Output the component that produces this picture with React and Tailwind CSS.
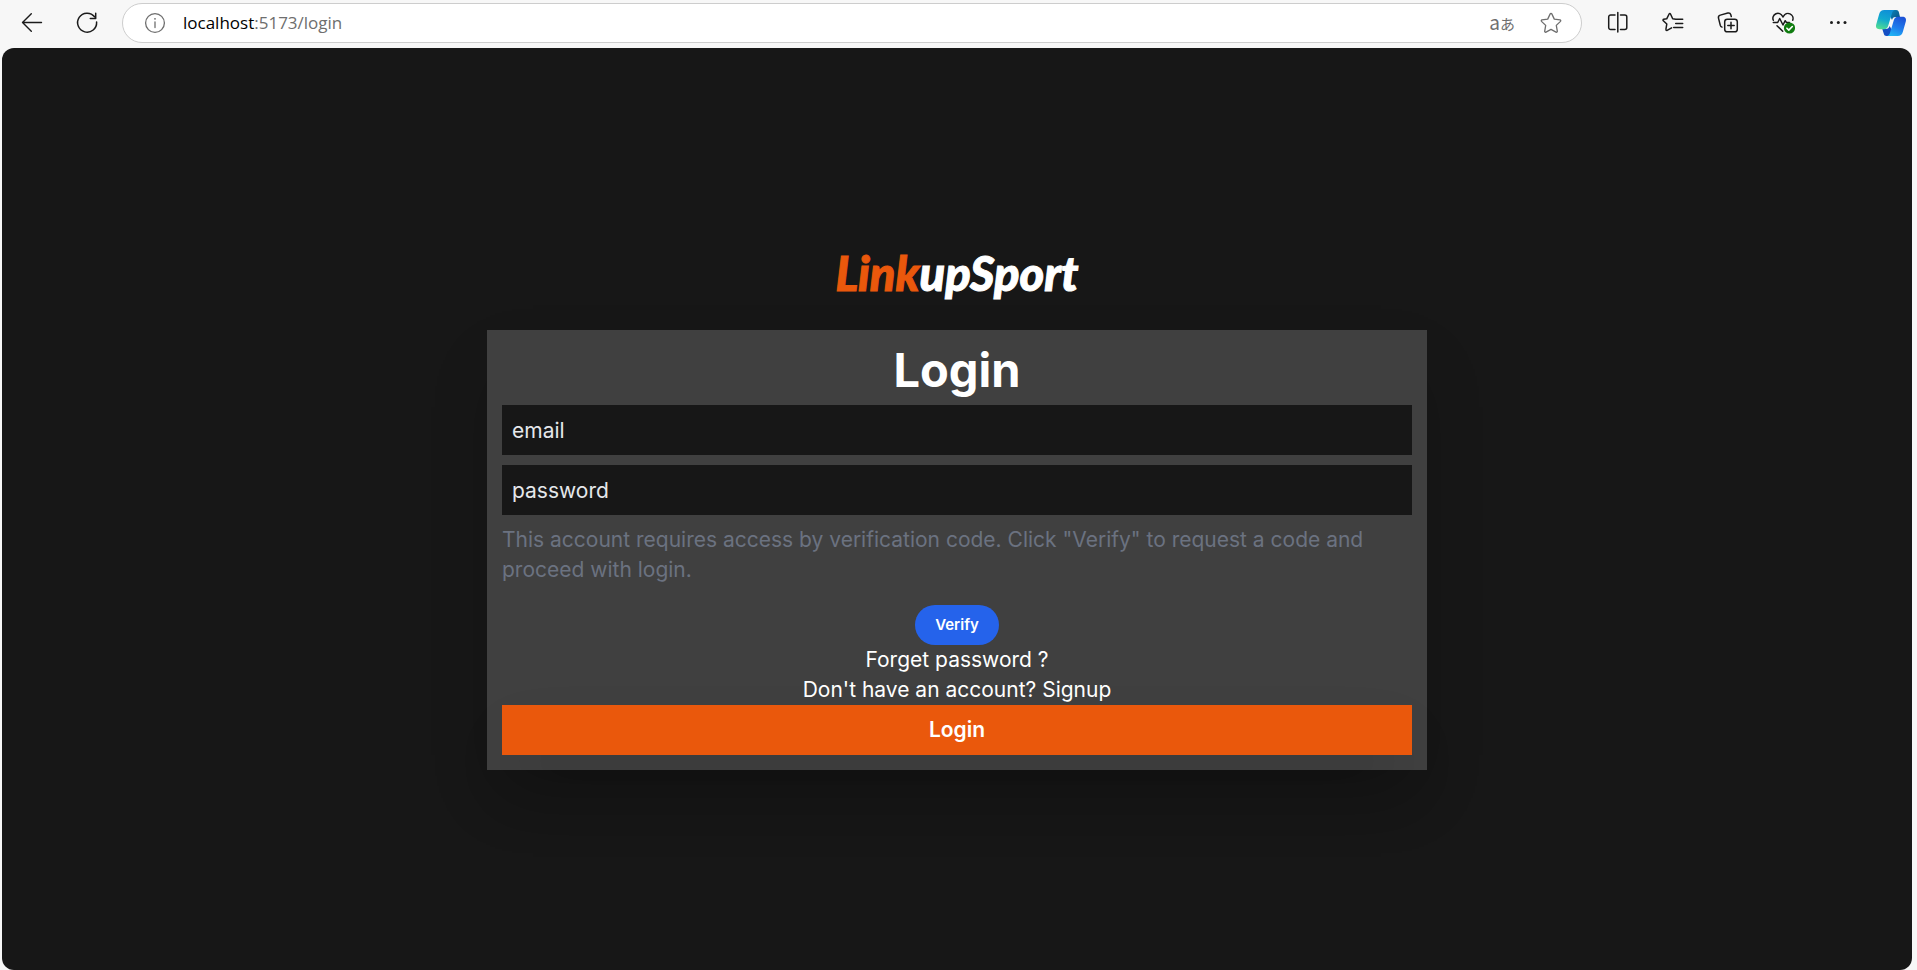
import React from "react";

const stroke = {
  fill: "none",
  stroke: "currentColor",
  strokeWidth: 1.5,
  strokeLinecap: "round",
  strokeLinejoin: "round",
};

function Icon({ children, className = "size-6" }) {
  return (
    <svg viewBox="0 0 24 24" className={className} aria-hidden="true" {...stroke}>
      {children}
    </svg>
  );
}

function BackIcon() {
  return (
    <Icon>
      <path d="M21.5 11.5H2.5M11.3 2.7L2.5 11.5l8.8 8.8" strokeWidth="1.4" />
    </Icon>
  );
}

function RefreshIcon() {
  return (
    <Icon>
      <path d="M21.6 11A9.5 9.5 0 1 1 19.6 5.8M20.7 2.3v5.2h-5.4" strokeWidth="1.5" />
    </Icon>
  );
}

function InfoIcon() {
  return (
    <Icon>
      <circle cx="12" cy="12" r="9.4" strokeWidth="1.3" />
      <path d="M12 11v5.5" strokeWidth="1.3" />
      <circle cx="12" cy="7.8" r=".9" fill="currentColor" stroke="none" />
    </Icon>
  );
}

function StarIcon() {
  return (
    <Icon>
      <path
        d="M11.2 2.9a.9.9 0 0 1 1.6 0l2.5 5.2 5.7.8a.9.9 0 0 1 .5 1.5l-4.2 4 1 5.7a.9.9 0 0 1-1.3 1L12 18.4l-5 2.7a.9.9 0 0 1-1.3-1l1-5.7-4.2-4a.9.9 0 0 1 .5-1.5l5.7-.8z"
        strokeWidth="1.3"
      />
    </Icon>
  );
}

function SplitIcon() {
  return (
    <Icon>
      <path d="M9 4H4.700A2 2 0 0 0 2.700 6v10.500a2 2 0 0 0 2 2H9M14.500 4h4.300a2 2 0 0 1 2 2v10.500a2 2 0 0 1-2 2h-4.300M11.800 1.500v19.500" />
    </Icon>
  );
}

function FavoritesIcon() {
  return (
    <Icon>
      <path d="M14.700 8.300l-3-.5L9.500 3a.8.8 0 0 0-1.400 0L5.700 7.800l-3 .5a.8.8 0 0 0-.4 1.400l3.500 3.300-.9 5.400a.8.8 0 0 0 1.200.9l4.500-2.500M14.700 8.300h7M14.700 12.500h7M12.700 16.500h9" />
    </Icon>
  );
}

function CollectionsIcon() {
  return (
    <Icon>
      <rect x="8.700" y="8.200" width="12.600" height="12.600" rx="2.600" />
      <path d="M15 11.300v6.400M11.800 14.500h6.400M15.300 5.600l-.5-1.800a2.500 2.500 0 0 0-3-1.700L4.300 4.100a2.500 2.500 0 0 0-1.800 3l1.800 7.300a2.500 2.500 0 0 0 1.700 1.700" />
    </Icon>
  );
}

function HealthIcon() {
  return (
    <Icon>
      <path d="M2.300 9.300a5 5 0 0 1 9.200-4l.5.6.500-.6a5 5 0 0 1 9.200 3.900M2.300 11.500h4.400l2-4 3.300 6.500 2.200-4.300 1.300 1.800h3M6 14.700l5.700 5.500" />
      <circle cx="18.500" cy="17" r="5.600" fill="#107c10" stroke="none" />
      <path d="M15.900 17.200l1.900 1.900 3.500-3.600" stroke="#fff" strokeWidth="1.600" />
    </Icon>
  );
}

function MoreIcon() {
  return (
    <Icon>
      <g fill="currentColor" stroke="none">
        <circle cx="5.500" cy="11.500" r="1.500" />
        <circle cx="12.300" cy="11.500" r="1.500" />
        <circle cx="19" cy="11.500" r="1.500" />
      </g>
    </Icon>
  );
}

function CopilotIcon() {
  return (
    <svg viewBox="0 0 32 28" className="h-7 w-8" aria-hidden="true">
      <defs>
        <linearGradient id="ribbonLeft" x1=".6" y1="0" x2=".3" y2="1">
          <stop offset="0" stopColor="#0f8fd7" />
          <stop offset=".5" stopColor="#12a9cf" />
          <stop offset="1" stopColor="#4fdc92" />
        </linearGradient>
        <linearGradient id="ribbonRight" x1=".7" y1="0" x2=".3" y2="1">
          <stop offset="0" stopColor="#1c52d6" />
          <stop offset=".55" stopColor="#1f7cec" />
          <stop offset="1" stopColor="#1fb4f4" />
        </linearGradient>
        <linearGradient id="foldTop" x1="0" y1="0" x2="1" y2="1">
          <stop offset="0" stopColor="#0a84b8" />
          <stop offset="1" stopColor="#0b4f83" />
        </linearGradient>
      </defs>
      <path d="M17 1h4.200c1.500 0 2.300.9 2.700 2.300L25 8h-4.500c-2 0-3 1.200-3.500 3L15 7z" fill="url(#foldTop)" />
      <path d="M15 27h-3.500c-1.500 0-2.300-.8-2.700-2.200L7.300 20h3.400c2.300 0 3.300-1 3.900-3l3 5z" fill="#154fc4" />
      <path d="M9.300 1h10.500c-1.600.4-2.400 1.700-2.900 3.400l-3.700 12.300C12.500 19 11.400 20.200 9 20.200H4.500C1.800 20.200.4 18.300 1.200 15.500l3-10.600C4.900 2.400 6.600 1 9.300 1z" fill="url(#ribbonLeft)" />
      <path d="M22.700 27H12.200c1.600-.4 2.400-1.700 2.900-3.400l3.700-12.300C19.500 9 20.600 7.800 23 7.800h4.500c2.700 0 4.100 1.900 3.300 4.700l-3 10.600c-.7 2.500-2.400 3.900-5.100 3.900z" fill="url(#ribbonRight)" />
    </svg>
  );
}

function ToolButton({ label, width = "w-[55px]", children }) {
  return (
    <button type="button" aria-label={label} className={`flex h-10 shrink-0 items-center justify-center ${width}`}>
      {children}
    </button>
  );
}

function BrowserBar() {
  return (
    <header className="flex h-12 shrink-0 items-start bg-[#f7f7f7] pl-1 pt-[3px] text-[#1b1b1b]">
      <ToolButton label="Back"><BackIcon /></ToolButton>
      <ToolButton label="Refresh"><RefreshIcon /></ToolButton>
      <div className="mx-2 flex h-10 min-w-0 flex-1 items-center rounded-full border border-[#cdcdcd] bg-white pl-5 pr-[18px] text-[#6e6e6e]">
        <button type="button" aria-label="Site information"><InfoIcon /></button>
        <p className="ml-4 flex-1 truncate font-['Open_Sans',sans-serif] text-[17px] leading-6">
          <span className="text-black">localhost</span>:5173/login
        </p>
        <button type="button" aria-label="Translate" className="mr-6 flex items-baseline font-['Noto_Sans_CJK_JP',sans-serif] leading-6">
          <span className="text-[19px]">a</span>
          <span className="text-[15px]">あ</span>
        </button>
        <button type="button" aria-label="Add to favorites"><StarIcon /></button>
      </div>
      <ToolButton label="Split screen"><SplitIcon /></ToolButton>
      <ToolButton label="Favorites"><FavoritesIcon /></ToolButton>
      <ToolButton label="Collections"><CollectionsIcon /></ToolButton>
      <ToolButton label="Browser essentials"><HealthIcon /></ToolButton>
      <ToolButton label="Settings and more"><MoreIcon /></ToolButton>
      <ToolButton label="Copilot" width="w-[52px]"><CopilotIcon /></ToolButton>
    </header>
  );
}

const field =
  "h-[50px] w-full bg-[#171717] px-2.5 text-[#e5e7eb] outline-none placeholder:text-[#e5e7eb] placeholder:opacity-100";

export default function App() {
  return (
    <div className="flex min-h-screen flex-col bg-[#f7f7f7]">
      <BrowserBar />
      <main className="ml-0.5 mr-[5px] flex flex-1 flex-col items-center justify-center rounded-xl bg-[#171717] font-['Inter',sans-serif] text-[21px] leading-[30px] text-white">
        <h1 className="mb-8 font-['Lato',sans-serif] text-[47px] font-black italic leading-[50px] [-webkit-text-stroke:1px_currentColor] [stroke-linejoin:round]">
          <span className="text-[#ea580c]">Link</span>upSport
        </h1>
        <form
          onSubmit={(e) => e.preventDefault()}
          className="flex w-full max-w-[940px] flex-col items-center bg-[#404040] p-[15px] shadow-[0_31px_62px_-15px_rgba(0,0,0,0.25)]"
        >
          <h2 className="mb-2.5 text-[47px] font-bold leading-[50px]">Login</h2>
          <input type="email" aria-label="email" placeholder="email" className={`${field} mb-2.5`} />
          <input type="password" aria-label="password" placeholder="password" className={`${field} mb-2.5`} />
          <p className="mb-5 w-full text-[#6b7280]">
            This account requires access by verification code. Click "Verify" to request a code and proceed with login.
          </p>
          <button type="button" className="h-10 rounded-full bg-[#2563eb] px-5 text-[15px] font-semibold">Verify</button>
          <a href="#forgot">Forget password ?</a>
          <a href="#signup">Don't have an account? Signup</a>
          <button type="submit" className="h-[50px] w-full bg-[#ea580c] text-[21px] font-semibold shadow-[0_31px_62px_-15px_rgba(0,0,0,0.25)]">
            Login
          </button>
        </form>
      </main>
    </div>
  );
}
